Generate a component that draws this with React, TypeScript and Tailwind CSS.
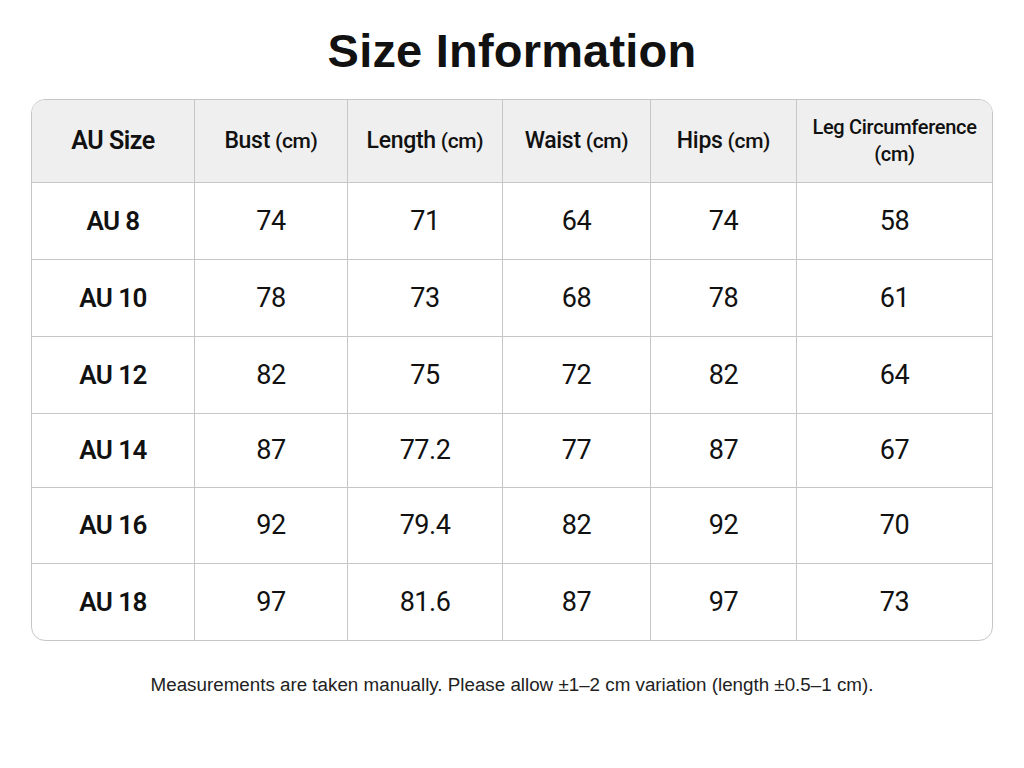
const headers: { label: string; unit?: string; small?: boolean }[] = [
  { label: "AU Size" },
  { label: "Bust", unit: "(cm)" },
  { label: "Length", unit: "(cm)" },
  { label: "Waist", unit: "(cm)" },
  { label: "Hips", unit: "(cm)" },
  { label: "Leg Circumference", unit: "(cm)", small: true },
];

const rows: string[][] = [
  ["AU 8", "74", "71", "64", "74", "58"],
  ["AU 10", "78", "73", "68", "78", "61"],
  ["AU 12", "82", "75", "72", "82", "64"],
  ["AU 14", "87", "77.2", "77", "87", "67"],
  ["AU 16", "92", "79.4", "82", "92", "70"],
  ["AU 18", "97", "81.6", "87", "97", "73"],
];

// row heights read off the picture, not quite even
const rowHeights = ["h-[77px]", "h-[77px]", "h-[77px]", "h-[74px]", "h-[76px]", "h-[76px]"];

export default function App() {
  return (
    <div className="min-h-[768px] w-full bg-white pt-[24px] text-[#111]">
      <h1 className="text-center font-['Liberation_Sans',Arial,sans-serif] text-[47px] font-bold leading-[54px] tracking-[0.2px]">
        Size Information
      </h1>

      <div className="mx-auto mt-[21px] w-[962px] overflow-hidden rounded-[14px] border border-[#c6c6c6] font-['Roboto',sans-serif]">
        <div className="grid grid-cols-[163px_153px_155px_148px_146px_1fr]">
          {headers.map((h, i) => (
            <div
              key={h.label}
              className={`flex h-[83px] items-center justify-center border-b border-[#c6c6c6] bg-[#efefef] text-center ${
                i < headers.length - 1 ? "border-r" : ""
              }`}
            >
              {h.small ? (
                <div className="text-[20px] font-medium leading-[27px] tracking-[-0.3px]">
                  {h.label}
                  <br />
                  {h.unit}
                </div>
              ) : i === 0 ? (
                <div className="text-[25px] font-semibold tracking-[-0.5px]">{h.label}</div>
              ) : (
                <div className="text-[23px] font-medium tracking-[-0.3px]">
                  {h.label}
                  {h.unit && <span className="text-[21px]"> {h.unit}</span>}
                </div>
              )}
            </div>
          ))}

          {rows.map((row, r) =>
            row.map((cell, c) => (
              <div
                key={`${r}-${c}`}
                className={`flex items-center justify-center border-[#c6c6c6] ${rowHeights[r]} ${
                  c < row.length - 1 ? "border-r" : ""
                } ${r < rows.length - 1 ? "border-b" : ""} ${
                  c === 0
                    ? "text-[26px] font-semibold tracking-[-0.6px]"
                    : "text-[27px] tracking-[-0.5px]"
                }`}
              >
                {cell}
              </div>
            ))
          )}
        </div>
      </div>

      <p className="mt-[32px] text-center font-['Liberation_Sans',Arial,sans-serif] text-[18.8px] leading-[24px] text-[#222]">
        Measurements are taken manually. Please allow ±1–2 cm variation (length ±0.5–1 cm).
      </p>
    </div>
  );
}
